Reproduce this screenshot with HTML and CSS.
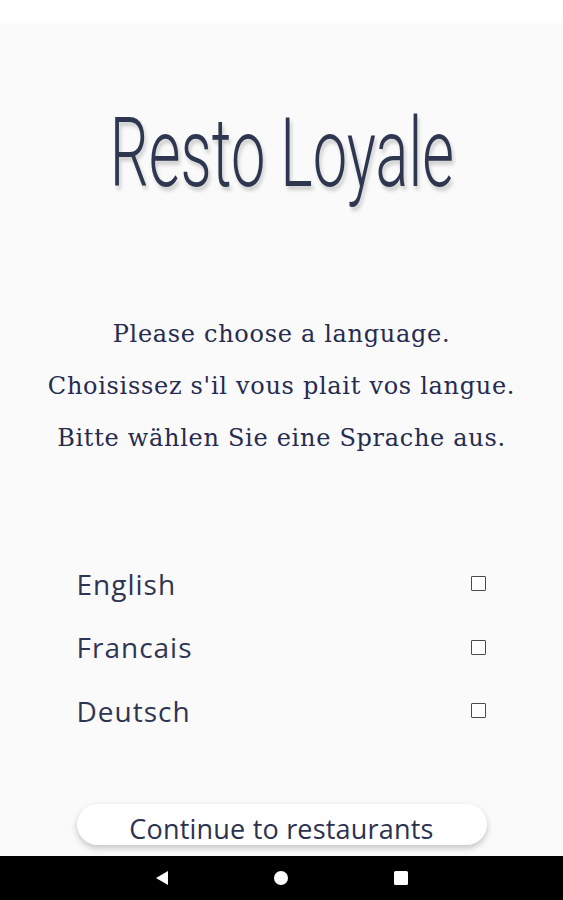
FILE: index.html
```html
<!DOCTYPE html>
<html lang="en">
<head>
    <meta charset="UTF-8">
    <meta name="viewport" content="width=device-width, initial-scale=1.0">
    <title>Resto Loyale</title>
    <link rel="stylesheet" href="styles.css">
</head>
<body>
    <div class="statusbar"></div>
    <div class="screen">
        <h1 class="title">Resto Loyale</h1>

        <div class="prompt">
            <p>Please choose a language.</p>
            <p>Choisissez s'il vous plait vos langue.</p>
            <p>Bitte wählen Sie eine Sprache aus.</p>
        </div>

        <div class="languages">
            <label class="lang-row">
                <span>English</span>
                <input type="checkbox" class="box">
            </label>
            <label class="lang-row">
                <span>Francais</span>
                <input type="checkbox" class="box">
            </label>
            <label class="lang-row">
                <span>Deutsch</span>
                <input type="checkbox" class="box">
            </label>
        </div>

        <button class="continue">Continue to restaurants</button>
    </div>
    <div class="navbar">
        <svg width="14" height="16" viewBox="0 0 14 16"><path d="M13 1 L1 8 L13 15 Z" fill="#fff"/></svg>
        <svg width="16" height="16" viewBox="0 0 16 16"><circle cx="8" cy="8" r="7" fill="#fff"/></svg>
        <svg width="16" height="16" viewBox="0 0 16 16"><rect x="1" y="1" width="14" height="14" rx="1.5" fill="#fff"/></svg>
    </div>
</body>
</html>
```

FILE: styles.css
```css
body {
    margin: 0;
    width: 563px;
    height: 900px;
    display: flex;
    flex-direction: column;
    background-color: #fafafa;
    overflow: hidden;
}
.statusbar {
    height: 23px;
    background-color: #ffffff;
}
.screen {
    flex: 1;
    display: flex;
    flex-direction: column;
    align-items: center;
    overflow: hidden;
}
.title {
    margin: 75px 0 0;
    font-family: Roboto, sans-serif;
    font-weight: 300;
    font-size: 96px;
    line-height: 110px;
    color: #2e3650;
    text-shadow: 3px 4px 5px rgba(0, 0, 0, 0.18);
    transform: scaleX(0.64);
    white-space: nowrap;
}
.prompt {
    margin-top: 100px;
    text-align: center;
    font-family: "DejaVu Serif", serif;
    font-size: 24px;
    letter-spacing: 0.7px;
    color: #262b50;
}
.prompt p {
    margin: 0;
    line-height: 52px;
}
.languages {
    margin-top: 88px;
    width: 410px;
    display: flex;
    flex-direction: column;
}
.lang-row {
    height: 63.5px;
    display: flex;
    align-items: center;
    justify-content: space-between;
    font-family: "Open Sans", sans-serif;
    font-size: 28px;
    letter-spacing: 1px;
    color: #2f3552;
}
.box {
    appearance: none;
    margin: 0 1px 0 0;
    width: 15px;
    height: 15px;
    border: 1.5px solid #4a4a4a;
    border-radius: 1px;
    background: #fff;
}
.continue {
    margin-top: 61px;
    flex-shrink: 0;
    width: 410px;
    height: 41px;
    border: none;
    border-radius: 21px;
    background-color: #ffffff;
    box-shadow: 0 3px 6px rgba(0, 0, 0, 0.22);
    font-family: "Open Sans", sans-serif;
    font-size: 27px;
    line-height: 30px;
    letter-spacing: 0.2px;
    color: #2c3150;
    padding: 10px 0 0;
    overflow: visible;
}
.navbar {
    height: 44px;
    background-color: #000;
    display: flex;
    align-items: center;
    justify-content: center;
    gap: 104px;
}
```
